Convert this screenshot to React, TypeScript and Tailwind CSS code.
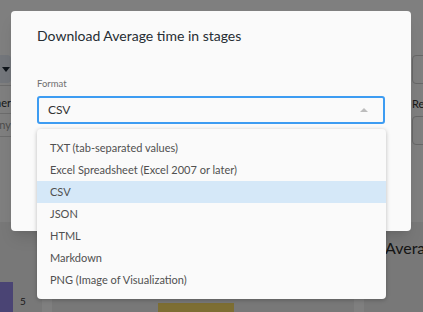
import React from 'react';

const formats = [
  'TXT (tab-separated values)',
  'Excel Spreadsheet (Excel 2007 or later)',
  'CSV',
  'JSON',
  'HTML',
  'Markdown',
  'PNG (Image of Visualization)',
];

function Dashboard() {
  return (
    <div className="flex h-full flex-col">
      <div className="h-[55px]" />
      {/* filter bar, cut off at both edges */}
      <div className="flex justify-between">
        <div className="-ml-[50px] flex w-[61px] flex-col">
          <div className="flex h-[28px] items-center justify-end rounded bg-[#e6edf6] pr-[1px]">
            <span className="h-0 w-0 border-x-[4px] border-t-[5px] border-x-transparent border-t-[#1f2a36]" />
          </div>
          <div className="mt-[2px] border-t border-[#d8d8d8] pt-[10px] text-right text-[11px] leading-[14px] text-[#333]">Owner</div>
          <div className="mt-[3px] flex h-[24px] items-center justify-end border-y border-[#d8d8d8] text-[11px] text-[#999]">Any</div>
        </div>
        <div className="-mr-[50px] flex w-[61px] flex-col">
          <div className="h-[29px] rounded border border-[#cfcfcf]" />
          <div className="pt-[13px] text-[11px] leading-[14px] text-[#333]">Recruiter</div>
          <div className="mt-[5px] h-[29px] rounded border border-[#cfcfcf]" />
        </div>
      </div>
      <div className="mt-auto flex h-[90px] gap-[10px]">
        <div className="flex w-[42px] shrink-0 items-end gap-[7px] bg-[#f1f1f1]">
          <div className="h-[30px] w-[13px] bg-[#9589e8]" />
          <span className="pb-[3px] text-[10px] text-[#333]">5</span>
        </div>
        <div className="flex w-[302px] shrink-0 items-end bg-[#f1f1f1] pl-[106px]">
          <div className="h-[9px] w-[76px] bg-[#fbdd66]" />
        </div>
        <div className="min-w-0 flex-1 overflow-hidden whitespace-nowrap bg-[#f1f1f1] pl-[21px] pt-[14px] text-[16px] text-[#2c2c2c]">
          Average time in stages
        </div>
      </div>
    </div>
  );
}

export default function App() {
  return (
    <div className="relative h-[312px] w-[423px] overflow-hidden bg-white font-['Lato',sans-serif]">
      <Dashboard />

      {/* overlay */}
      <div className="absolute inset-0 bg-black/50" />

      {/* modal */}
      <div className="absolute left-[11px] top-[11px] h-[220px] w-[400px] rounded-[4px] bg-[#fafafa] px-[26px] pt-[15px] shadow-lg">
        <h2 className="text-[14px] leading-[20px] text-[#262d33]">Download Average time in stages</h2>
        <div className="mt-[32px] text-[9.5px] leading-[12px] text-[#6f6f6f]">Format</div>
        <div className="mt-[6px] flex h-[28px] w-[348px] items-center justify-between rounded-[3px] border-2 border-[#3d9cf2] bg-[#fafafa] pl-[9px] pr-[15px]">
          <span className="text-[12px] text-[#333]">CSV</span>
          <span className="h-0 w-0 border-x-[4.5px] border-b-[4px] border-x-transparent border-b-[#bdbdbd]" />
        </div>
      </div>

      {/* open select menu */}
      <div className="absolute left-[37px] top-[129px] w-[349px] rounded-[4px] bg-[#fafafa] py-[8px] shadow-[0_1px_4px_rgba(0,0,0,0.25)]">
        {formats.map((f) => (
          <div
            key={f}
            className={`flex h-[22px] items-center pl-[13px] text-[11px] text-[#505050] ${
              f === 'CSV' ? 'bg-[#d5e8f8]' : ''
            }`}
          >
            {f}
          </div>
        ))}
      </div>
    </div>
  );
}
